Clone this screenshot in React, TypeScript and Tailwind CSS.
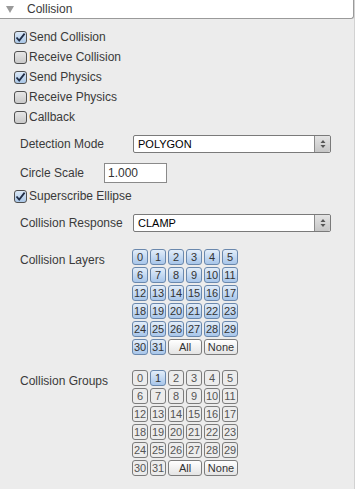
import React from "react";

const font = { fontFamily: '"Liberation Sans", Arial, sans-serif' };

function Check({ label, checked }: { label: string; checked?: boolean }) {
  return (
    <div className="flex h-5 items-center pl-[14px]">
      <div
        className={
          "flex h-[13px] w-[13px] items-center justify-center rounded-[3px] border border-[#505050] " +
          (checked
            ? "bg-gradient-to-b from-[#dce9f7] to-[#a9c6e6]"
            : "bg-gradient-to-b from-[#e6e6e6] to-[#c9c9c9]")
        }
      >
        {checked && (
          <svg width="11" height="11" viewBox="0 0 11 11">
            <path d="M1.5 5.5 L4.2 8.6 L9.6 1.6" fill="none" stroke="#1f2d47" strokeWidth="1.8" />
          </svg>
        )}
      </div>
      <span className="ml-[2px] text-[12px] text-[#3a3a3a]">{label}</span>
    </div>
  );
}

function Select({ value }: { value: string }) {
  return (
    <div className="ml-[133px] flex h-[18px] w-[198px] rounded-[2px] border border-[#7a7a7a] bg-white">
      <div className="flex flex-1 items-center pl-[4px] text-[11px] text-black">{value}</div>
      <div className="flex w-[16px] items-center justify-center rounded-r-[2px] border-l border-[#8a8a8a] bg-gradient-to-b from-[#e4e4e4] to-[#c6c6c6]">
        <svg width="6" height="10" viewBox="0 0 6 10">
          <path d="M3 1 L5.5 4 L0.5 4 Z M3 9 L5.5 6 L0.5 6 Z" fill="#555" />
        </svg>
      </div>
    </div>
  );
}

function Row({ label, children }: { label: string; children: React.ReactNode }) {
  return (
    <div className="relative flex items-center">
      <span className="absolute left-[20px] text-[12px] text-[#3a3a3a]">{label}</span>
      {children}
    </div>
  );
}

function Bits({ label, on }: { label: string; on: (n: number) => boolean }) {
  const nums = Array.from({ length: 32 }, (_, i) => i);
  const base = "flex h-[16px] items-center justify-center rounded-[3px] border text-[11px] leading-none";
  const onCls = " border-[#6a88ad] bg-gradient-to-b from-[#e2edf9] to-[#a8c6ea] text-[#333]";
  const offCls = " border-[#7c7c7c] bg-[#ececec] text-[#555]";
  return (
    <div className="flex">
      <div className="w-[132px] pl-[20px] pt-[2px] text-[12px] text-[#3a3a3a]">{label}</div>
      <div className="grid grid-cols-[repeat(6,16px)] grid-rows-[repeat(6,16px)] gap-[2px]">
        {nums.map((n) => (
          <div key={n} className={base + (on(n) ? onCls : offCls)}>
            {n}
          </div>
        ))}
        <div className={base + " col-span-2 border-[#7c7c7c] bg-gradient-to-b from-white to-[#e4e4e4] text-[#333]"}>All</div>
        <div className={base + " col-span-2 border-[#7c7c7c] bg-gradient-to-b from-white to-[#e4e4e4] text-[#333]"}>None</div>
      </div>
    </div>
  );
}

export default function App() {
  return (
    <div className="min-h-[489px] w-[356px] bg-white" style={font}>
      <div className="min-h-[489px] w-[355px] border-r border-[#d2d2d2] bg-[#ececec]">
        <div className="flex h-[19px] items-center rounded-br-[3px] border-b border-r border-[#9a9a9a] bg-white">
          <svg className="ml-[6px]" width="8" height="7" viewBox="0 0 8 7">
            <path d="M0 0 L8 0 L4 7 Z" fill="#9a9a9a" />
          </svg>
          <span className="ml-[13px] text-[12px] text-[#3a3a3a]">Collision</span>
        </div>

        <div className="pt-[8px]">
          <Check label="Send Collision" checked />
          <Check label="Receive Collision" />
          <Check label="Send Physics" checked />
          <Check label="Receive Physics" />
          <Check label="Callback" />
        </div>

        <div className="mt-[8px]">
          <Row label="Detection Mode">
            <Select value="POLYGON" />
          </Row>
        </div>

        <div className="mt-[10px]">
          <Row label="Circle Scale">
            <div className="ml-[104px] flex h-[20px] w-[63px] items-center border border-[#8a8a8a] bg-white pl-[3px] text-[12px] text-[#333]">
              1.000
            </div>
          </Row>
        </div>

        <div className="mt-[3px]">
          <Check label="Superscribe Ellipse" checked />
        </div>

        <div className="mt-[8px]">
          <Row label="Collision Response">
            <Select value="CLAMP" />
          </Row>
        </div>

        <div className="mt-[17px]">
          <Bits label="Collision Layers" on={() => true} />
        </div>

        <div className="mt-[15px]">
          <Bits label="Collision Groups" on={(n) => n === 1} />
        </div>
      </div>
    </div>
  );
}
